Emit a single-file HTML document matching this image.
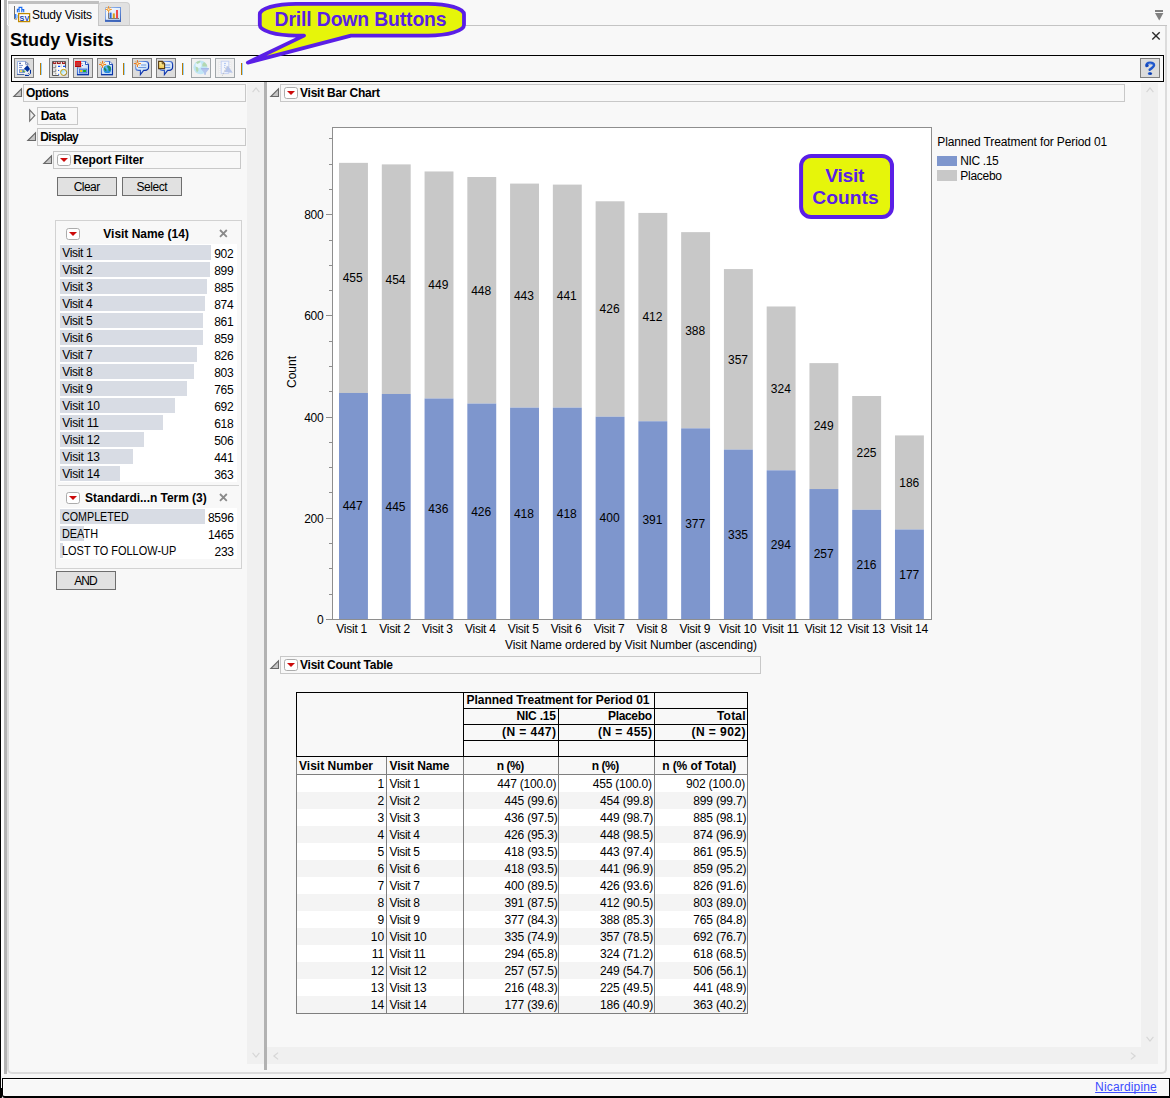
<!DOCTYPE html>
<html><head><meta charset="utf-8"><title>Study Visits</title>
<style>
html,body{margin:0;padding:0;}
body{width:1170px;height:1098px;position:relative;overflow:hidden;background:#fff;font-family:"Liberation Sans", sans-serif;font-size:12px;color:#000;}
.a{position:absolute;box-sizing:border-box;}
.t{position:absolute;white-space:pre;}
svg{position:absolute;overflow:visible;}
</style></head><body>
<div class="a" style="left:0px;top:0px;width:1170px;height:1098px;background:#f8f8f8;"></div>
<div class="a" style="left:0px;top:0px;width:1px;height:1098px;background:#000;"></div>
<div class="a" style="left:1px;top:0px;width:3px;height:1076px;background:#fff;"></div>
<div class="a" style="left:4px;top:0px;width:3px;height:1074px;background:#b4b4b4;"></div>
<div class="a" style="left:7px;top:25px;width:1160px;height:1049px;border:2px solid #dcdcdc;border-top:none;border-radius:0 0 5px 5px;"></div>
<div class="a" style="left:98px;top:25px;width:1069px;height:1px;background:#c4c4c4;"></div>
<div class="a" style="left:8px;top:1px;width:91px;height:25px;background:#f8f8f8;"></div>
<div class="a" style="left:8px;top:1px;width:91px;height:3px;background:#c0c0c0;"></div>
<div class="a" style="left:7px;top:0px;width:1px;height:25px;background:#fff;"></div>
<div class="a" style="left:8px;top:4px;width:1px;height:21px;background:#e4e4e4;"></div>
<div class="a" style="left:98px;top:2px;width:32px;height:24px;background:#e1e1e1;border:1px solid #d0d0d0;border-radius:4px 4px 0 0;border-left-color:#c6c6c6;border-bottom:1px solid #c4c4c4;"></div>
<div class="t" style="left:32.00px;top:5.84px;font-size:12px;line-height:18px;letter-spacing:-0.226px;">Study Visits</div>
<svg style="left:1150px;top:5px" width="20" height="40" viewBox="1150 5 20 40"><rect x="1155" y="10" width="8" height="2" fill="#808080"/><path d="M1155 13h8.4l-4.2 7.4z" fill="#808080"/><path d="M1152.3 32.3l7.4 7.2M1159.7 32.3l-7.4 7.2" stroke="#2b2b2b" stroke-width="1.4" fill="none"/></svg>
<div class="t" style="left:9.90px;top:26.96px;font-size:18px;line-height:27px;font-weight:bold;letter-spacing:0.082px;">Study Visits</div>
<div class="a" style="left:11px;top:55px;width:1153px;height:27px;border:1px solid #000;"></div>
<div class="a" style="left:14px;top:58px;width:20px;height:20px;background:#dcdcdc;border:1px solid #7f7f7f;"></div>
<div class="a" style="left:49px;top:58px;width:20px;height:20px;background:#dcdcdc;border:1px solid #7f7f7f;"></div>
<div class="a" style="left:73px;top:58px;width:20px;height:20px;background:#dcdcdc;border:1px solid #7f7f7f;"></div>
<div class="a" style="left:97px;top:58px;width:20px;height:20px;background:#dcdcdc;border:1px solid #7f7f7f;"></div>
<div class="a" style="left:132px;top:58px;width:20px;height:20px;background:#dcdcdc;border:1px solid #7f7f7f;"></div>
<div class="a" style="left:156px;top:58px;width:20px;height:20px;background:#dcdcdc;border:1px solid #7f7f7f;"></div>
<div class="a" style="left:191px;top:58px;width:20px;height:20px;background:#f1f1f1;border:1px solid #a0a6a9;"></div>
<div class="a" style="left:215px;top:58px;width:20px;height:20px;background:#f1f1f1;border:1px solid #a0a6a9;"></div>
<div class="a" style="left:40px;top:63px;width:1px;height:12px;background:#c07c00;"></div>
<div class="a" style="left:41px;top:63px;width:1px;height:12px;background:#8fd0ff;"></div>
<div class="a" style="left:123px;top:63px;width:1px;height:12px;background:#c07c00;"></div>
<div class="a" style="left:124px;top:63px;width:1px;height:12px;background:#8fd0ff;"></div>
<div class="a" style="left:182px;top:63px;width:1px;height:12px;background:#c07c00;"></div>
<div class="a" style="left:183px;top:63px;width:1px;height:12px;background:#8fd0ff;"></div>
<div class="a" style="left:241px;top:63px;width:1px;height:12px;background:#c07c00;"></div>
<div class="a" style="left:242px;top:63px;width:1px;height:12px;background:#8fd0ff;"></div>
<div class="a" style="left:1140px;top:58px;width:20px;height:20px;background:#dcdcdc;border:1px solid #7f7f7f;"></div>
<svg style="left:1140px;top:58px" width="20" height="20" viewBox="1140 58 20 20"><path d="M1146.5 65.9Q1145.9 62.9 1150.2 62.8Q1154.3 62.9 1154 65.4Q1153.8 66.9 1149.7 69.8" stroke="#1f57cc" stroke-width="2.5" fill="none" stroke-linecap="round"/><circle cx="1147.2" cy="65.6" r="1.5" fill="#1546b8"/><path d="M1148.6 64.2Q1150 63.2 1151.6 64.4" stroke="#7fa8f0" stroke-width="0.9" fill="none"/><ellipse cx="1150" cy="73.4" rx="2.1" ry="1.5" fill="#1f57cc"/><ellipse cx="1150.6" cy="73.8" rx="1.1" ry="0.8" fill="#0a349c"/></svg>
<div class="a" style="left:247px;top:83px;width:17px;height:981px;background:#f0f0f0;"></div>
<svg style="left:256.3px;top:90.2px" width="1" height="1"><path d="M-3.4 2.1L0 -2.1L3.4 2.1" stroke="#d6d6d6" stroke-width="1.2" fill="none"/></svg>
<svg style="left:256.4px;top:1055.4px" width="1" height="1"><path d="M-3.4 -2.1L0 2.1L3.4 -2.1" stroke="#d6d6d6" stroke-width="1.2" fill="none"/></svg>
<div class="a" style="left:264px;top:82px;width:3px;height:988px;background:#b2b2b2;"></div>
<svg style="left:13px;top:88px" width="10" height="10"><path d="M8.5 0.8V8.5H0.8Z" fill="#c6c6c6" stroke="#686868" stroke-width="1.1"/></svg>
<div class="a" style="left:23px;top:84px;width:223px;height:18px;border:1px solid #c8c8c8;"></div>
<div class="t" style="left:26.00px;top:83.84px;font-size:12px;line-height:18px;font-weight:bold;letter-spacing:-0.388px;">Options</div>
<svg style="left:29px;top:109px" width="8" height="14"><path d="M0.7 0.9L5.8 6.5L0.7 12.1Z" fill="#f0f0f0" stroke="#707070" stroke-width="1.15"/></svg>
<div class="a" style="left:37px;top:107px;width:41px;height:18px;border:1px solid #c8c8c8;"></div>
<div class="t" style="left:40.70px;top:106.84px;font-size:12px;line-height:18px;font-weight:bold;letter-spacing:-0.239px;">Data</div>
<svg style="left:27px;top:132px" width="10" height="10"><path d="M8.5 0.8V8.5H0.8Z" fill="#c6c6c6" stroke="#686868" stroke-width="1.1"/></svg>
<div class="a" style="left:37px;top:128px;width:209px;height:18px;border:1px solid #c8c8c8;"></div>
<div class="t" style="left:40.30px;top:127.84px;font-size:12px;line-height:18px;font-weight:bold;letter-spacing:-0.698px;">Display</div>
<svg style="left:43px;top:155px" width="10" height="10"><path d="M8.5 0.8V8.5H0.8Z" fill="#c6c6c6" stroke="#686868" stroke-width="1.1"/></svg>
<div class="a" style="left:53px;top:151px;width:188px;height:18px;border:1px solid #c8c8c8;"></div>
<svg style="left:57px;top:154px" width="14" height="12"><rect x="0.5" y="0.5" width="13" height="11" rx="2.2" fill="#fff" stroke="#acacac"/><path d="M3.0 3.9h8l-4 4z" fill="#cc0a0a"/></svg>
<div class="t" style="left:73.30px;top:150.84px;font-size:12px;line-height:18px;font-weight:bold;letter-spacing:-0.070px;">Report Filter</div>
<div class="a" style="left:57px;top:177px;width:60px;height:19px;background:#e1e1e1;border:1px solid #6e6e6e;"></div>
<div class="t" style="left:73.75px;top:177.54px;font-size:12px;line-height:18px;letter-spacing:-0.547px;">Clear</div>
<div class="a" style="left:122px;top:177px;width:60px;height:19px;background:#e1e1e1;border:1px solid #6e6e6e;"></div>
<div class="t" style="left:136.50px;top:177.54px;font-size:12px;line-height:18px;letter-spacing:-0.472px;">Select</div>
<div class="a" style="left:55px;top:220px;width:187px;height:349px;border:1px solid #d2d2d2;"></div>
<svg style="left:66px;top:227.6px" width="14" height="12"><rect x="0.5" y="0.5" width="13" height="11" rx="2.2" fill="#fff" stroke="#acacac"/><path d="M3.0 3.9h8l-4 4z" fill="#cc0a0a"/></svg>
<div class="t" style="left:103.30px;top:224.64px;font-size:12px;line-height:18px;font-weight:bold;letter-spacing:-0.016px;">Visit Name (14)</div>
<svg style="left:219px;top:229px" width="9" height="9"><path d="M1 1l6.8 6.8M7.8 1l-6.8 6.8" stroke="#8a8a8a" stroke-width="1.8" fill="none"/></svg>
<div class="a" style="left:60px;top:244px;width:177px;height:238px;background:#fff;"></div>
<div class="a" style="left:60px;top:245px;width:151px;height:15px;background:#d8dce4;"></div>
<div class="t" style="left:62.30px;top:244.04px;font-size:12px;line-height:18px;letter-spacing:-0.333px;">Visit 1</div>
<div class="t" style="left:214.17px;top:245.04px;font-size:12px;line-height:18px;letter-spacing:-0.300px;">902</div>
<div class="a" style="left:60px;top:262px;width:150px;height:15px;background:#d8dce4;"></div>
<div class="t" style="left:62.30px;top:261.04px;font-size:12px;line-height:18px;letter-spacing:-0.333px;">Visit 2</div>
<div class="t" style="left:214.17px;top:262.04px;font-size:12px;line-height:18px;letter-spacing:-0.300px;">899</div>
<div class="a" style="left:60px;top:279px;width:147px;height:15px;background:#d8dce4;"></div>
<div class="t" style="left:62.30px;top:278.04px;font-size:12px;line-height:18px;letter-spacing:-0.333px;">Visit 3</div>
<div class="t" style="left:214.17px;top:279.04px;font-size:12px;line-height:18px;letter-spacing:-0.300px;">885</div>
<div class="a" style="left:60px;top:296px;width:145px;height:15px;background:#d8dce4;"></div>
<div class="t" style="left:62.30px;top:295.04px;font-size:12px;line-height:18px;letter-spacing:-0.333px;">Visit 4</div>
<div class="t" style="left:214.17px;top:296.04px;font-size:12px;line-height:18px;letter-spacing:-0.300px;">874</div>
<div class="a" style="left:60px;top:313px;width:143px;height:15px;background:#d8dce4;"></div>
<div class="t" style="left:62.30px;top:312.04px;font-size:12px;line-height:18px;letter-spacing:-0.333px;">Visit 5</div>
<div class="t" style="left:214.17px;top:313.04px;font-size:12px;line-height:18px;letter-spacing:-0.300px;">861</div>
<div class="a" style="left:60px;top:330px;width:143px;height:15px;background:#d8dce4;"></div>
<div class="t" style="left:62.30px;top:329.04px;font-size:12px;line-height:18px;letter-spacing:-0.333px;">Visit 6</div>
<div class="t" style="left:214.17px;top:330.04px;font-size:12px;line-height:18px;letter-spacing:-0.300px;">859</div>
<div class="a" style="left:60px;top:347px;width:137px;height:15px;background:#d8dce4;"></div>
<div class="t" style="left:62.30px;top:346.04px;font-size:12px;line-height:18px;letter-spacing:-0.333px;">Visit 7</div>
<div class="t" style="left:214.17px;top:347.04px;font-size:12px;line-height:18px;letter-spacing:-0.300px;">826</div>
<div class="a" style="left:60px;top:364px;width:134px;height:15px;background:#d8dce4;"></div>
<div class="t" style="left:62.30px;top:363.04px;font-size:12px;line-height:18px;letter-spacing:-0.333px;">Visit 8</div>
<div class="t" style="left:214.17px;top:364.04px;font-size:12px;line-height:18px;letter-spacing:-0.300px;">803</div>
<div class="a" style="left:60px;top:381px;width:127px;height:15px;background:#d8dce4;"></div>
<div class="t" style="left:62.30px;top:380.04px;font-size:12px;line-height:18px;letter-spacing:-0.333px;">Visit 9</div>
<div class="t" style="left:214.17px;top:381.04px;font-size:12px;line-height:18px;letter-spacing:-0.300px;">765</div>
<div class="a" style="left:60px;top:398px;width:115px;height:15px;background:#d8dce4;"></div>
<div class="t" style="left:62.30px;top:397.04px;font-size:12px;line-height:18px;letter-spacing:-0.214px;">Visit 10</div>
<div class="t" style="left:214.17px;top:398.04px;font-size:12px;line-height:18px;letter-spacing:-0.300px;">692</div>
<div class="a" style="left:60px;top:415px;width:103px;height:15px;background:#d8dce4;"></div>
<div class="t" style="left:62.30px;top:414.04px;font-size:12px;line-height:18px;letter-spacing:-0.214px;">Visit 11</div>
<div class="t" style="left:214.17px;top:415.04px;font-size:12px;line-height:18px;letter-spacing:-0.300px;">618</div>
<div class="a" style="left:60px;top:432px;width:84px;height:15px;background:#d8dce4;"></div>
<div class="t" style="left:62.30px;top:431.04px;font-size:12px;line-height:18px;letter-spacing:-0.214px;">Visit 12</div>
<div class="t" style="left:214.17px;top:432.04px;font-size:12px;line-height:18px;letter-spacing:-0.300px;">506</div>
<div class="a" style="left:60px;top:449px;width:73px;height:15px;background:#d8dce4;"></div>
<div class="t" style="left:62.30px;top:448.04px;font-size:12px;line-height:18px;letter-spacing:-0.214px;">Visit 13</div>
<div class="t" style="left:214.17px;top:449.04px;font-size:12px;line-height:18px;letter-spacing:-0.300px;">441</div>
<div class="a" style="left:60px;top:466px;width:60px;height:15px;background:#d8dce4;"></div>
<div class="t" style="left:62.30px;top:465.04px;font-size:12px;line-height:18px;letter-spacing:-0.214px;">Visit 14</div>
<div class="t" style="left:214.17px;top:466.04px;font-size:12px;line-height:18px;letter-spacing:-0.300px;">363</div>
<div class="a" style="left:58px;top:485px;width:181px;height:1px;background:#d2d2d2;"></div>
<svg style="left:66px;top:492px" width="14" height="12"><rect x="0.5" y="0.5" width="13" height="11" rx="2.2" fill="#fff" stroke="#acacac"/><path d="M3.0 3.9h8l-4 4z" fill="#cc0a0a"/></svg>
<div class="t" style="left:85.10px;top:488.64px;font-size:12px;line-height:18px;font-weight:bold;letter-spacing:-0.041px;">Standardi...n Term (3)</div>
<svg style="left:219px;top:493px" width="9" height="9"><path d="M1 1l6.8 6.8M7.8 1l-6.8 6.8" stroke="#8a8a8a" stroke-width="1.8" fill="none"/></svg>
<div class="a" style="left:60px;top:508px;width:177px;height:51px;background:#fff;"></div>
<div class="a" style="left:60px;top:509px;width:145px;height:15px;background:#d8dce4;"></div>
<div class="t" style="left:62.30px;top:507.84px;font-size:12px;line-height:18px;transform:scaleX(0.8929);transform-origin:0 0;">COMPLETED</div>
<div class="t" style="left:207.90px;top:508.84px;font-size:12px;line-height:18px;letter-spacing:-0.200px;">8596</div>
<div class="a" style="left:60px;top:526px;width:24px;height:15px;background:#d8dce4;"></div>
<div class="t" style="left:62.30px;top:524.84px;font-size:12px;line-height:18px;transform:scaleX(0.9045);transform-origin:0 0;">DEATH</div>
<div class="t" style="left:207.90px;top:525.84px;font-size:12px;line-height:18px;letter-spacing:-0.200px;">1465</div>
<div class="a" style="left:60px;top:543px;width:3px;height:15px;background:#d8dce4;"></div>
<div class="t" style="left:62.30px;top:541.84px;font-size:12px;line-height:18px;transform:scaleX(0.9129);transform-origin:0 0;">LOST TO FOLLOW-UP</div>
<div class="t" style="left:214.57px;top:542.84px;font-size:12px;line-height:18px;letter-spacing:-0.300px;">233</div>
<div class="a" style="left:56px;top:571px;width:60px;height:19px;background:#e1e1e1;border:1px solid #6e6e6e;"></div>
<div class="t" style="left:74.25px;top:571.54px;font-size:12px;line-height:18px;letter-spacing:-0.922px;">AND</div>
<div class="a" style="left:1141px;top:83px;width:17px;height:981px;background:#f0f0f0;"></div>
<div class="a" style="left:267px;top:1047px;width:891px;height:17px;background:#f0f0f0;"></div>
<svg style="left:1150.4px;top:90.2px" width="1" height="1"><path d="M-3.4 2.1L0 -2.1L3.4 2.1" stroke="#d6d6d6" stroke-width="1.2" fill="none"/></svg>
<svg style="left:1150.3px;top:1038.6px" width="1" height="1"><path d="M-3.4 -2.1L0 2.1L3.4 -2.1" stroke="#d6d6d6" stroke-width="1.2" fill="none"/></svg>
<svg style="left:275.6px;top:1055.5px" width="1" height="1"><path d="M2.1 -3.4L-2.1 0L2.1 3.4" stroke="#d6d6d6" stroke-width="1.2" fill="none"/></svg>
<svg style="left:1132.9px;top:1055.5px" width="1" height="1"><path d="M-2.1 -3.4L2.1 0L-2.1 3.4" stroke="#d6d6d6" stroke-width="1.2" fill="none"/></svg>
<svg style="left:270px;top:88px" width="10" height="10"><path d="M8.5 0.8V8.5H0.8Z" fill="#c6c6c6" stroke="#686868" stroke-width="1.1"/></svg>
<div class="a" style="left:280px;top:84px;width:845px;height:18px;border:1px solid #c8c8c8;"></div>
<svg style="left:284px;top:87px" width="14" height="12"><rect x="0.5" y="0.5" width="13" height="11" rx="2.2" fill="#fff" stroke="#acacac"/><path d="M3.0 3.9h8l-4 4z" fill="#cc0a0a"/></svg>
<div class="t" style="left:300.00px;top:83.84px;font-size:12px;line-height:18px;font-weight:bold;letter-spacing:-0.224px;">Visit Bar Chart</div>
<svg style="left:0;top:0" width="1170" height="700"><rect x="332.5" y="127.5" width="599" height="492" fill="#fff" stroke="#8e8e8e" shape-rendering="crispEdges"/><rect x="339.03" y="162.86" width="28.9" height="230.09" fill="#c8c8c8"/><rect x="339.03" y="392.95" width="28.9" height="226.05" fill="#7e96cd"/><rect x="381.80" y="164.38" width="28.9" height="229.59" fill="#c8c8c8"/><rect x="381.80" y="393.96" width="28.9" height="225.04" fill="#7e96cd"/><rect x="424.56" y="171.46" width="28.9" height="227.06" fill="#c8c8c8"/><rect x="424.56" y="398.51" width="28.9" height="220.49" fill="#7e96cd"/><rect x="467.33" y="177.02" width="28.9" height="226.55" fill="#c8c8c8"/><rect x="467.33" y="403.57" width="28.9" height="215.43" fill="#7e96cd"/><rect x="510.09" y="183.59" width="28.9" height="224.03" fill="#c8c8c8"/><rect x="510.09" y="407.62" width="28.9" height="211.38" fill="#7e96cd"/><rect x="552.86" y="184.60" width="28.9" height="223.01" fill="#c8c8c8"/><rect x="552.86" y="407.62" width="28.9" height="211.38" fill="#7e96cd"/><rect x="595.62" y="201.29" width="28.9" height="215.43" fill="#c8c8c8"/><rect x="595.62" y="416.72" width="28.9" height="202.28" fill="#7e96cd"/><rect x="638.39" y="212.92" width="28.9" height="208.35" fill="#c8c8c8"/><rect x="638.39" y="421.27" width="28.9" height="197.73" fill="#7e96cd"/><rect x="681.15" y="232.14" width="28.9" height="196.21" fill="#c8c8c8"/><rect x="681.15" y="428.35" width="28.9" height="190.65" fill="#7e96cd"/><rect x="723.92" y="269.06" width="28.9" height="180.53" fill="#c8c8c8"/><rect x="723.92" y="449.59" width="28.9" height="169.41" fill="#7e96cd"/><rect x="766.68" y="306.48" width="28.9" height="163.85" fill="#c8c8c8"/><rect x="766.68" y="470.32" width="28.9" height="148.68" fill="#7e96cd"/><rect x="809.45" y="363.12" width="28.9" height="125.92" fill="#c8c8c8"/><rect x="809.45" y="489.04" width="28.9" height="129.96" fill="#7e96cd"/><rect x="852.21" y="395.99" width="28.9" height="113.78" fill="#c8c8c8"/><rect x="852.21" y="509.77" width="28.9" height="109.23" fill="#7e96cd"/><rect x="894.98" y="435.43" width="28.9" height="94.06" fill="#c8c8c8"/><rect x="894.98" y="529.49" width="28.9" height="89.51" fill="#7e96cd"/><rect x="326" y="619" width="6" height="1" fill="#8e8e8e" shape-rendering="crispEdges"/><rect x="329" y="594" width="3" height="1" fill="#8e8e8e" shape-rendering="crispEdges"/><rect x="329" y="568" width="3" height="1" fill="#8e8e8e" shape-rendering="crispEdges"/><rect x="329" y="543" width="3" height="1" fill="#8e8e8e" shape-rendering="crispEdges"/><rect x="326" y="518" width="6" height="1" fill="#8e8e8e" shape-rendering="crispEdges"/><rect x="329" y="492" width="3" height="1" fill="#8e8e8e" shape-rendering="crispEdges"/><rect x="329" y="467" width="3" height="1" fill="#8e8e8e" shape-rendering="crispEdges"/><rect x="329" y="442" width="3" height="1" fill="#8e8e8e" shape-rendering="crispEdges"/><rect x="326" y="417" width="6" height="1" fill="#8e8e8e" shape-rendering="crispEdges"/><rect x="329" y="391" width="3" height="1" fill="#8e8e8e" shape-rendering="crispEdges"/><rect x="329" y="366" width="3" height="1" fill="#8e8e8e" shape-rendering="crispEdges"/><rect x="329" y="341" width="3" height="1" fill="#8e8e8e" shape-rendering="crispEdges"/><rect x="326" y="315" width="6" height="1" fill="#8e8e8e" shape-rendering="crispEdges"/><rect x="329" y="290" width="3" height="1" fill="#8e8e8e" shape-rendering="crispEdges"/><rect x="329" y="265" width="3" height="1" fill="#8e8e8e" shape-rendering="crispEdges"/><rect x="329" y="240" width="3" height="1" fill="#8e8e8e" shape-rendering="crispEdges"/><rect x="326" y="214" width="6" height="1" fill="#8e8e8e" shape-rendering="crispEdges"/><rect x="329" y="189" width="3" height="1" fill="#8e8e8e" shape-rendering="crispEdges"/><rect x="329" y="164" width="3" height="1" fill="#8e8e8e" shape-rendering="crispEdges"/><rect x="329" y="138" width="3" height="1" fill="#8e8e8e" shape-rendering="crispEdges"/></svg>
<div class="t" style="left:316.91px;top:611.04px;font-size:12px;line-height:18px;">0</div>
<div class="t" style="left:304.17px;top:510.04px;font-size:12px;line-height:18px;letter-spacing:-0.300px;">200</div>
<div class="t" style="left:304.17px;top:409.04px;font-size:12px;line-height:18px;letter-spacing:-0.300px;">400</div>
<div class="t" style="left:304.17px;top:307.04px;font-size:12px;line-height:18px;letter-spacing:-0.300px;">600</div>
<div class="t" style="left:304.17px;top:206.04px;font-size:12px;line-height:18px;letter-spacing:-0.300px;">800</div>
<div class="t" style="left:336.32px;top:620.04px;font-size:12px;line-height:18px;letter-spacing:-0.250px;">Visit 1</div>
<div class="t" style="left:342.68px;top:496.69px;font-size:12px;line-height:18px;">447</div>
<div class="t" style="left:342.68px;top:268.69px;font-size:12px;line-height:18px;">455</div>
<div class="t" style="left:379.20px;top:620.04px;font-size:12px;line-height:18px;letter-spacing:-0.250px;">Visit 2</div>
<div class="t" style="left:385.50px;top:497.69px;font-size:12px;line-height:18px;">445</div>
<div class="t" style="left:385.50px;top:270.69px;font-size:12px;line-height:18px;">454</div>
<div class="t" style="left:422.09px;top:620.04px;font-size:12px;line-height:18px;letter-spacing:-0.250px;">Visit 3</div>
<div class="t" style="left:428.31px;top:499.69px;font-size:12px;line-height:18px;">436</div>
<div class="t" style="left:428.31px;top:275.69px;font-size:12px;line-height:18px;">449</div>
<div class="t" style="left:464.97px;top:620.04px;font-size:12px;line-height:18px;letter-spacing:-0.250px;">Visit 4</div>
<div class="t" style="left:471.13px;top:502.69px;font-size:12px;line-height:18px;">426</div>
<div class="t" style="left:471.13px;top:281.69px;font-size:12px;line-height:18px;">448</div>
<div class="t" style="left:507.86px;top:620.04px;font-size:12px;line-height:18px;letter-spacing:-0.250px;">Visit 5</div>
<div class="t" style="left:513.94px;top:504.69px;font-size:12px;line-height:18px;">418</div>
<div class="t" style="left:513.94px;top:286.69px;font-size:12px;line-height:18px;">443</div>
<div class="t" style="left:550.74px;top:620.04px;font-size:12px;line-height:18px;letter-spacing:-0.250px;">Visit 6</div>
<div class="t" style="left:556.76px;top:504.69px;font-size:12px;line-height:18px;">418</div>
<div class="t" style="left:556.76px;top:286.69px;font-size:12px;line-height:18px;">441</div>
<div class="t" style="left:593.63px;top:620.04px;font-size:12px;line-height:18px;letter-spacing:-0.250px;">Visit 7</div>
<div class="t" style="left:599.57px;top:508.69px;font-size:12px;line-height:18px;">400</div>
<div class="t" style="left:599.57px;top:299.69px;font-size:12px;line-height:18px;">426</div>
<div class="t" style="left:636.51px;top:620.04px;font-size:12px;line-height:18px;letter-spacing:-0.250px;">Visit 8</div>
<div class="t" style="left:642.39px;top:510.69px;font-size:12px;line-height:18px;">391</div>
<div class="t" style="left:642.39px;top:307.69px;font-size:12px;line-height:18px;">412</div>
<div class="t" style="left:679.40px;top:620.04px;font-size:12px;line-height:18px;letter-spacing:-0.250px;">Visit 9</div>
<div class="t" style="left:685.20px;top:514.69px;font-size:12px;line-height:18px;">377</div>
<div class="t" style="left:685.20px;top:321.69px;font-size:12px;line-height:18px;">388</div>
<div class="t" style="left:718.94px;top:620.04px;font-size:12px;line-height:18px;letter-spacing:-0.214px;">Visit 10</div>
<div class="t" style="left:728.02px;top:525.69px;font-size:12px;line-height:18px;">335</div>
<div class="t" style="left:728.02px;top:350.69px;font-size:12px;line-height:18px;">357</div>
<div class="t" style="left:762.27px;top:620.04px;font-size:12px;line-height:18px;letter-spacing:-0.214px;">Visit 11</div>
<div class="t" style="left:770.83px;top:535.69px;font-size:12px;line-height:18px;">294</div>
<div class="t" style="left:770.83px;top:379.69px;font-size:12px;line-height:18px;">324</div>
<div class="t" style="left:804.71px;top:620.04px;font-size:12px;line-height:18px;letter-spacing:-0.214px;">Visit 12</div>
<div class="t" style="left:813.65px;top:544.69px;font-size:12px;line-height:18px;">257</div>
<div class="t" style="left:813.65px;top:416.69px;font-size:12px;line-height:18px;">249</div>
<div class="t" style="left:847.60px;top:620.04px;font-size:12px;line-height:18px;letter-spacing:-0.214px;">Visit 13</div>
<div class="t" style="left:856.46px;top:555.69px;font-size:12px;line-height:18px;">216</div>
<div class="t" style="left:856.46px;top:443.69px;font-size:12px;line-height:18px;">225</div>
<div class="t" style="left:890.48px;top:620.04px;font-size:12px;line-height:18px;letter-spacing:-0.214px;">Visit 14</div>
<div class="t" style="left:899.28px;top:565.69px;font-size:12px;line-height:18px;">177</div>
<div class="t" style="left:899.28px;top:473.69px;font-size:12px;line-height:18px;">186</div>
<div class="t" style="left:505.00px;top:636.04px;font-size:12px;line-height:18px;letter-spacing:-0.097px;">Visit Name ordered by Visit Number (ascending)</div>
<div class="t" style="left:0.00px;top:-13.16px;font-size:12px;line-height:18px;left:285px;top:388.4px;transform:rotate(-90deg);transform-origin:0 0;line-height:14px;">Count</div>
<div class="t" style="left:937.30px;top:133.04px;font-size:12px;line-height:18px;letter-spacing:-0.115px;">Planned Treatment for Period 01</div>
<div class="a" style="left:937px;top:155.6px;width:19.6px;height:10.2px;background:#7e96cd;"></div>
<div class="t" style="left:960.30px;top:151.64px;font-size:12px;line-height:18px;letter-spacing:-0.383px;">NIC .15</div>
<div class="a" style="left:937px;top:170.4px;width:19.6px;height:10.2px;background:#c8c8c8;"></div>
<div class="t" style="left:960.30px;top:166.64px;font-size:12px;line-height:18px;letter-spacing:-0.283px;">Placebo</div>
<svg style="left:270px;top:660px" width="10" height="10"><path d="M8.5 0.8V8.5H0.8Z" fill="#c6c6c6" stroke="#686868" stroke-width="1.1"/></svg>
<div class="a" style="left:280px;top:656px;width:481px;height:18px;border:1px solid #c8c8c8;"></div>
<svg style="left:284px;top:659px" width="14" height="12"><rect x="0.5" y="0.5" width="13" height="11" rx="2.2" fill="#fff" stroke="#acacac"/><path d="M3.0 3.9h8l-4 4z" fill="#cc0a0a"/></svg>
<div class="t" style="left:300.00px;top:655.84px;font-size:12px;line-height:18px;font-weight:bold;letter-spacing:-0.244px;">Visit Count Table</div>
<div class="a" style="left:297px;top:775px;width:450px;height:17px;background:#fff;"></div>
<div class="a" style="left:297px;top:792px;width:450px;height:17px;background:#f4f4f4;"></div>
<div class="a" style="left:297px;top:809px;width:450px;height:17px;background:#fff;"></div>
<div class="a" style="left:297px;top:826px;width:450px;height:17px;background:#f4f4f4;"></div>
<div class="a" style="left:297px;top:843px;width:450px;height:17px;background:#fff;"></div>
<div class="a" style="left:297px;top:860px;width:450px;height:17px;background:#f4f4f4;"></div>
<div class="a" style="left:297px;top:877px;width:450px;height:17px;background:#fff;"></div>
<div class="a" style="left:297px;top:894px;width:450px;height:17px;background:#f4f4f4;"></div>
<div class="a" style="left:297px;top:911px;width:450px;height:17px;background:#fff;"></div>
<div class="a" style="left:297px;top:928px;width:450px;height:17px;background:#f4f4f4;"></div>
<div class="a" style="left:297px;top:945px;width:450px;height:17px;background:#fff;"></div>
<div class="a" style="left:297px;top:962px;width:450px;height:17px;background:#f4f4f4;"></div>
<div class="a" style="left:297px;top:979px;width:450px;height:17px;background:#fff;"></div>
<div class="a" style="left:297px;top:996px;width:450px;height:17px;background:#f4f4f4;"></div>
<div class="a" style="left:296px;top:692px;width:452px;height:1px;background:#000;"></div>
<div class="a" style="left:296px;top:692px;width:1px;height:65px;background:#000;"></div>
<div class="a" style="left:747px;top:692px;width:1px;height:65px;background:#000;"></div>
<div class="a" style="left:296px;top:756px;width:452px;height:1px;background:#000;"></div>
<div class="a" style="left:463px;top:708px;width:285px;height:1px;background:#000;"></div>
<div class="a" style="left:463px;top:724px;width:285px;height:1px;background:#000;"></div>
<div class="a" style="left:463px;top:740px;width:285px;height:1px;background:#000;"></div>
<div class="a" style="left:463px;top:692px;width:1px;height:65px;background:#000;"></div>
<div class="a" style="left:654px;top:692px;width:1px;height:65px;background:#000;"></div>
<div class="a" style="left:558px;top:708px;width:1px;height:49px;background:#000;"></div>
<div class="a" style="left:296px;top:757px;width:1px;height:257px;background:#7f7f7f;"></div>
<div class="a" style="left:747px;top:757px;width:1px;height:257px;background:#7f7f7f;"></div>
<div class="a" style="left:386px;top:757px;width:1px;height:257px;background:#7f7f7f;"></div>
<div class="a" style="left:463px;top:757px;width:1px;height:257px;background:#7f7f7f;"></div>
<div class="a" style="left:558px;top:757px;width:1px;height:257px;background:#7f7f7f;"></div>
<div class="a" style="left:654px;top:757px;width:1px;height:257px;background:#7f7f7f;"></div>
<div class="a" style="left:296px;top:774px;width:452px;height:1px;background:#7f7f7f;"></div>
<div class="a" style="left:296px;top:1013px;width:452px;height:1px;background:#7f7f7f;"></div>
<div class="t" style="left:466.50px;top:691.44px;font-size:12px;line-height:18px;font-weight:bold;letter-spacing:-0.035px;">Planned Treatment for Period 01</div>
<div class="t" style="left:516.50px;top:707.44px;font-size:12px;line-height:18px;font-weight:bold;letter-spacing:-0.198px;">NIC .15</div>
<div class="t" style="left:608.00px;top:707.44px;font-size:12px;line-height:18px;font-weight:bold;letter-spacing:-0.339px;">Placebo</div>
<div class="t" style="left:717.00px;top:707.44px;font-size:12px;line-height:18px;font-weight:bold;letter-spacing:0.180px;">Total</div>
<div class="t" style="left:502.00px;top:723.44px;font-size:12px;line-height:18px;font-weight:bold;letter-spacing:0.455px;">(N = 447)</div>
<div class="t" style="left:598.00px;top:723.44px;font-size:12px;line-height:18px;font-weight:bold;letter-spacing:0.455px;">(N = 455)</div>
<div class="t" style="left:691.50px;top:723.44px;font-size:12px;line-height:18px;font-weight:bold;letter-spacing:0.455px;">(N = 902)</div>
<div class="t" style="left:299.00px;top:757.24px;font-size:12px;line-height:18px;font-weight:bold;letter-spacing:0.017px;">Visit Number</div>
<div class="t" style="left:389.50px;top:757.24px;font-size:12px;line-height:18px;font-weight:bold;letter-spacing:-0.128px;">Visit Name</div>
<div class="t" style="left:496.75px;top:757.24px;font-size:12px;line-height:18px;font-weight:bold;letter-spacing:-0.457px;">n (%)</div>
<div class="t" style="left:591.75px;top:757.24px;font-size:12px;line-height:18px;font-weight:bold;letter-spacing:-0.457px;">n (%)</div>
<div class="t" style="left:662.20px;top:757.24px;font-size:12px;line-height:18px;font-weight:bold;letter-spacing:-0.084px;">n (% of Total)</div>
<div class="t" style="left:377.51px;top:774.84px;font-size:12px;line-height:18px;">1</div>
<div class="t" style="left:389.50px;top:774.84px;font-size:12px;line-height:18px;letter-spacing:-0.333px;">Visit 1</div>
<div class="t" style="left:497.31px;top:774.84px;font-size:12px;line-height:18px;letter-spacing:-0.230px;">447 (100.0)</div>
<div class="t" style="left:592.81px;top:774.84px;font-size:12px;line-height:18px;letter-spacing:-0.230px;">455 (100.0)</div>
<div class="t" style="left:686.11px;top:774.84px;font-size:12px;line-height:18px;letter-spacing:-0.230px;">902 (100.0)</div>
<div class="t" style="left:377.51px;top:791.84px;font-size:12px;line-height:18px;">2</div>
<div class="t" style="left:389.50px;top:791.84px;font-size:12px;line-height:18px;letter-spacing:-0.333px;">Visit 2</div>
<div class="t" style="left:504.45px;top:791.84px;font-size:12px;line-height:18px;letter-spacing:-0.156px;">445 (99.6)</div>
<div class="t" style="left:599.95px;top:791.84px;font-size:12px;line-height:18px;letter-spacing:-0.156px;">454 (99.8)</div>
<div class="t" style="left:693.25px;top:791.84px;font-size:12px;line-height:18px;letter-spacing:-0.156px;">899 (99.7)</div>
<div class="t" style="left:377.51px;top:808.84px;font-size:12px;line-height:18px;">3</div>
<div class="t" style="left:389.50px;top:808.84px;font-size:12px;line-height:18px;letter-spacing:-0.333px;">Visit 3</div>
<div class="t" style="left:504.45px;top:808.84px;font-size:12px;line-height:18px;letter-spacing:-0.156px;">436 (97.5)</div>
<div class="t" style="left:599.95px;top:808.84px;font-size:12px;line-height:18px;letter-spacing:-0.156px;">449 (98.7)</div>
<div class="t" style="left:693.25px;top:808.84px;font-size:12px;line-height:18px;letter-spacing:-0.156px;">885 (98.1)</div>
<div class="t" style="left:377.51px;top:825.84px;font-size:12px;line-height:18px;">4</div>
<div class="t" style="left:389.50px;top:825.84px;font-size:12px;line-height:18px;letter-spacing:-0.333px;">Visit 4</div>
<div class="t" style="left:504.45px;top:825.84px;font-size:12px;line-height:18px;letter-spacing:-0.156px;">426 (95.3)</div>
<div class="t" style="left:599.95px;top:825.84px;font-size:12px;line-height:18px;letter-spacing:-0.156px;">448 (98.5)</div>
<div class="t" style="left:693.25px;top:825.84px;font-size:12px;line-height:18px;letter-spacing:-0.156px;">874 (96.9)</div>
<div class="t" style="left:377.51px;top:842.84px;font-size:12px;line-height:18px;">5</div>
<div class="t" style="left:389.50px;top:842.84px;font-size:12px;line-height:18px;letter-spacing:-0.333px;">Visit 5</div>
<div class="t" style="left:504.45px;top:842.84px;font-size:12px;line-height:18px;letter-spacing:-0.156px;">418 (93.5)</div>
<div class="t" style="left:599.95px;top:842.84px;font-size:12px;line-height:18px;letter-spacing:-0.156px;">443 (97.4)</div>
<div class="t" style="left:693.25px;top:842.84px;font-size:12px;line-height:18px;letter-spacing:-0.156px;">861 (95.5)</div>
<div class="t" style="left:377.51px;top:859.84px;font-size:12px;line-height:18px;">6</div>
<div class="t" style="left:389.50px;top:859.84px;font-size:12px;line-height:18px;letter-spacing:-0.333px;">Visit 6</div>
<div class="t" style="left:504.45px;top:859.84px;font-size:12px;line-height:18px;letter-spacing:-0.156px;">418 (93.5)</div>
<div class="t" style="left:599.95px;top:859.84px;font-size:12px;line-height:18px;letter-spacing:-0.156px;">441 (96.9)</div>
<div class="t" style="left:693.25px;top:859.84px;font-size:12px;line-height:18px;letter-spacing:-0.156px;">859 (95.2)</div>
<div class="t" style="left:377.51px;top:876.84px;font-size:12px;line-height:18px;">7</div>
<div class="t" style="left:389.50px;top:876.84px;font-size:12px;line-height:18px;letter-spacing:-0.333px;">Visit 7</div>
<div class="t" style="left:504.45px;top:876.84px;font-size:12px;line-height:18px;letter-spacing:-0.156px;">400 (89.5)</div>
<div class="t" style="left:599.95px;top:876.84px;font-size:12px;line-height:18px;letter-spacing:-0.156px;">426 (93.6)</div>
<div class="t" style="left:693.25px;top:876.84px;font-size:12px;line-height:18px;letter-spacing:-0.156px;">826 (91.6)</div>
<div class="t" style="left:377.51px;top:893.84px;font-size:12px;line-height:18px;">8</div>
<div class="t" style="left:389.50px;top:893.84px;font-size:12px;line-height:18px;letter-spacing:-0.333px;">Visit 8</div>
<div class="t" style="left:504.45px;top:893.84px;font-size:12px;line-height:18px;letter-spacing:-0.156px;">391 (87.5)</div>
<div class="t" style="left:599.95px;top:893.84px;font-size:12px;line-height:18px;letter-spacing:-0.156px;">412 (90.5)</div>
<div class="t" style="left:693.25px;top:893.84px;font-size:12px;line-height:18px;letter-spacing:-0.156px;">803 (89.0)</div>
<div class="t" style="left:377.51px;top:910.84px;font-size:12px;line-height:18px;">9</div>
<div class="t" style="left:389.50px;top:910.84px;font-size:12px;line-height:18px;letter-spacing:-0.333px;">Visit 9</div>
<div class="t" style="left:504.45px;top:910.84px;font-size:12px;line-height:18px;letter-spacing:-0.156px;">377 (84.3)</div>
<div class="t" style="left:599.95px;top:910.84px;font-size:12px;line-height:18px;letter-spacing:-0.156px;">388 (85.3)</div>
<div class="t" style="left:693.25px;top:910.84px;font-size:12px;line-height:18px;letter-spacing:-0.156px;">765 (84.8)</div>
<div class="t" style="left:370.84px;top:927.84px;font-size:12px;line-height:18px;">10</div>
<div class="t" style="left:389.50px;top:927.84px;font-size:12px;line-height:18px;letter-spacing:-0.286px;">Visit 10</div>
<div class="t" style="left:504.45px;top:927.84px;font-size:12px;line-height:18px;letter-spacing:-0.156px;">335 (74.9)</div>
<div class="t" style="left:599.95px;top:927.84px;font-size:12px;line-height:18px;letter-spacing:-0.156px;">357 (78.5)</div>
<div class="t" style="left:693.25px;top:927.84px;font-size:12px;line-height:18px;letter-spacing:-0.156px;">692 (76.7)</div>
<div class="t" style="left:371.73px;top:944.84px;font-size:12px;line-height:18px;">11</div>
<div class="t" style="left:389.50px;top:944.84px;font-size:12px;line-height:18px;letter-spacing:-0.286px;">Visit 11</div>
<div class="t" style="left:504.45px;top:944.84px;font-size:12px;line-height:18px;letter-spacing:-0.156px;">294 (65.8)</div>
<div class="t" style="left:599.95px;top:944.84px;font-size:12px;line-height:18px;letter-spacing:-0.156px;">324 (71.2)</div>
<div class="t" style="left:693.25px;top:944.84px;font-size:12px;line-height:18px;letter-spacing:-0.156px;">618 (68.5)</div>
<div class="t" style="left:370.84px;top:961.84px;font-size:12px;line-height:18px;">12</div>
<div class="t" style="left:389.50px;top:961.84px;font-size:12px;line-height:18px;letter-spacing:-0.286px;">Visit 12</div>
<div class="t" style="left:504.45px;top:961.84px;font-size:12px;line-height:18px;letter-spacing:-0.156px;">257 (57.5)</div>
<div class="t" style="left:599.95px;top:961.84px;font-size:12px;line-height:18px;letter-spacing:-0.156px;">249 (54.7)</div>
<div class="t" style="left:693.25px;top:961.84px;font-size:12px;line-height:18px;letter-spacing:-0.156px;">506 (56.1)</div>
<div class="t" style="left:370.84px;top:978.84px;font-size:12px;line-height:18px;">13</div>
<div class="t" style="left:389.50px;top:978.84px;font-size:12px;line-height:18px;letter-spacing:-0.286px;">Visit 13</div>
<div class="t" style="left:504.45px;top:978.84px;font-size:12px;line-height:18px;letter-spacing:-0.156px;">216 (48.3)</div>
<div class="t" style="left:599.95px;top:978.84px;font-size:12px;line-height:18px;letter-spacing:-0.156px;">225 (49.5)</div>
<div class="t" style="left:693.25px;top:978.84px;font-size:12px;line-height:18px;letter-spacing:-0.156px;">441 (48.9)</div>
<div class="t" style="left:370.84px;top:995.84px;font-size:12px;line-height:18px;">14</div>
<div class="t" style="left:389.50px;top:995.84px;font-size:12px;line-height:18px;letter-spacing:-0.286px;">Visit 14</div>
<div class="t" style="left:504.45px;top:995.84px;font-size:12px;line-height:18px;letter-spacing:-0.156px;">177 (39.6)</div>
<div class="t" style="left:599.95px;top:995.84px;font-size:12px;line-height:18px;letter-spacing:-0.156px;">186 (40.9)</div>
<div class="t" style="left:693.25px;top:995.84px;font-size:12px;line-height:18px;letter-spacing:-0.156px;">363 (40.2)</div>
<div class="a" style="left:0px;top:1088px;width:2px;height:10px;background:#000;border-radius:0 0 0 3px;"></div>
<div class="a" style="left:2px;top:1078px;width:1168px;height:20px;background:#f8f8f8;border:1px solid #000;border-bottom-width:2px;border-right-width:1px;border-radius:0 0 0 3px;box-shadow:inset 1px 1px 0 #fff;"></div>
<div class="t" style="left:1095.10px;top:1078.14px;font-size:12px;line-height:18px;letter-spacing:0.167px;color:#3a4cff;text-decoration:underline;text-decoration-skip-ink:none;">Nicardipine</div>
<svg style="left:0;top:0" width="1170" height="240"><path d="M296 3.8H428A36 10.5 0 0 1 464 14.3V25.1A36 10.5 0 0 1 428 35.6H351L247.8 62.6L304 35.6H296A36.2 10.5 0 0 1 259.8 25.1V14.3A36.2 10.5 0 0 1 296 3.8Z" fill="#e6f50a" stroke="#5a1fe6" stroke-width="3.8" stroke-linejoin="round"/><rect x="801.1" y="156" width="90.9" height="61" rx="10" fill="#e6f50a" stroke="#5a1fe6" stroke-width="4"/></svg>
<div class="t" style="left:274.60px;top:4.68px;font-size:19.4px;line-height:29px;font-weight:bold;letter-spacing:-0.147px;color:#5a1fe6;">Drill Down Buttons</div>
<div class="t" style="left:825.26px;top:160.65px;font-size:19.2px;line-height:29px;font-weight:bold;letter-spacing:-0.275px;color:#5a1fe6;">Visit</div>
<div class="t" style="left:812.25px;top:182.55px;font-size:19.2px;line-height:29px;font-weight:bold;letter-spacing:0.080px;color:#5a1fe6;">Counts</div>
<svg style="left:0;top:0" width="260" height="84"><defs><linearGradient id="gb" x1="0" y1="0" x2="1" y2="1"><stop offset="0" stop-color="#b4ccf4"/><stop offset="0.38" stop-color="#4a78d8"/><stop offset="0.7" stop-color="#0a2fa8"/><stop offset="1" stop-color="#0a2fa8"/></linearGradient><linearGradient id="gf" x1="0" y1="0" x2="0.6" y2="1"><stop offset="0" stop-color="#ffffff"/><stop offset="1" stop-color="#b9d6f4"/></linearGradient><radialGradient id="gg" cx="0.4" cy="0.35" r="0.7"><stop offset="0" stop-color="#5cc0ff"/><stop offset="1" stop-color="#1c7fd8"/></radialGradient><linearGradient id="gy" x1="0" y1="0" x2="0" y2="1"><stop offset="0" stop-color="#fff3a8"/><stop offset="1" stop-color="#f2c94c"/></linearGradient></defs><path d="M14.5 6v13h2.6" stroke="#707070" fill="none"/><path d="M17.4 12.2V9.4H19.1V7.4H21.8V9.6H23.7V12.2M19.1 9.4V12.2M21.8 9.6V12.2" stroke="#1a6cf0" stroke-width="1.15" fill="none"/><rect x="15" y="14" width="1.4" height="4.2" fill="#2a7cff"/><rect x="16.4" y="15" width="1.6" height="3.2" fill="#9cc8ff"/><rect x="18.6" y="13.6" width="11" height="8" fill="#fff" stroke="#c08a00" stroke-width="1.25"/><defs><linearGradient id="gc" x1="0" y1="0" x2="1" y2="1"><stop offset="0" stop-color="#a4c2f2"/><stop offset="0.5" stop-color="#6f98e0"/><stop offset="1" stop-color="#3a60b6"/></linearGradient><linearGradient id="gci" x1="0" y1="0" x2="1" y2="1"><stop offset="0" stop-color="#ffffff"/><stop offset="1" stop-color="#c6dcf6"/></linearGradient></defs><rect x="105.5" y="7.5" width="15" height="14" fill="url(#gci)" stroke="url(#gc)"/><rect x="105" y="19.8" width="16" height="1.9" fill="#3f66ba"/><path d="M108.5 12.6v5.9h10.5" stroke="#7a7a7a" fill="none"/><rect x="109.6" y="12.6" width="2" height="5.6" fill="#2f6ad8"/><rect x="112.8" y="13.4" width="2" height="4.8" fill="#d4a018"/><rect x="116" y="10" width="2" height="8.2" fill="#f04a4a"/><path d="M106.52 7.32L110.68 11.48M110.68 7.32L106.52 11.48" stroke="#f0a818" stroke-width="0.95" stroke-dasharray="1.5 0.5" fill="none"/><path d="M105.40 9.40L111.80 9.40M108.60 6.20L108.60 12.60" stroke="#f08a20" stroke-width="1" fill="none"/><circle cx="108.6" cy="9.4" r="0.9" fill="#ffe4b8"/><path d="M17.5 74V61.5H25.6" fill="none" stroke="#9db4e0"/><rect x="18" y="62" width="7.6" height="12" fill="#fff"/><path d="M25.6 61.6V64.3H28.2" fill="#fff" stroke="#5a74b0" stroke-width="0.8"/><path d="M25.8 61.8L29.2 64.6" stroke="#41588e" stroke-width="0.9" stroke-dasharray="1.1 0.7"/><path d="M25.6 64.5L28.4 68.4V73.6H25.6Z" fill="#eef2fa"/><path d="M17 74.4H24.2" stroke="#3c5a9c" stroke-width="1"/><path d="M24.2 74.5L27 75" stroke="#9db4e0" stroke-width="0.8"/><path d="M19 63.3h2" stroke="#1c3a90" stroke-width="0.9"/><path d="M19 65.4h4M19 67.4h3" stroke="#5a78c0" stroke-width="0.8"/><rect x="19" y="69.2" width="6" height="3.8" fill="#7d98cd"/><rect x="20" y="70.2" width="2" height="1.9" fill="#ffd85a"/><path d="M23 72.1V70.2L25.6 72.1Z" fill="#4aa83a"/><path d="M23.6 70.2H25L26.4 72.1H25.4Z" fill="#bfe3b4"/><path d="M24 68.6L27.5 65.2L30 68.9L27.5 72.1Z" fill="#00309c"/><path d="M30.5 69.8V73.4L29.4 74.6M28.9 75.5H25" stroke="#00309c" stroke-width="1" fill="none"/><rect x="27.9" y="73" width="0.9" height="0.9" fill="#3a56a6"/><rect x="52.8" y="61.8" width="12.6" height="13.6" fill="#e9e9e9"/><rect x="53" y="64.4" width="3.4" height="11" fill="#d6d6d6"/><rect x="56.4" y="64.6" width="8.6" height="10.6" fill="#fdfcf8"/><path d="M52.5 75.5V61.5H65.5V67.8" fill="none" stroke="#484848" stroke-width="0.9"/><path d="M52.5 75.5H58.8" stroke="#484848" stroke-width="0.9"/><path d="M53.1 62.1h3.1v1.9h-3.1zM57 62.1h3.7v1.9H57zM62 62.1h3v1.9h-3z" fill="#a31e1e"/><path d="M54 62.4h1.4M58 62.4h1.8M63 62.4h1.4" stroke="#f6eaea" stroke-width="0.8"/><path d="M53.2 66.3h2.1M53.2 70.3h2.1M53.2 74.2h2.1" stroke="#fff" stroke-width="1.3"/><path d="M55.8 65.4v1.9h-2.6M55.8 69.4v1.9h-2.6M55.8 73.2v1" stroke="#7c7c7c" stroke-width="0.9" fill="none"/><path d="M61.4 64.6v3" stroke="#c4c4c4" stroke-width="0.6"/><path d="M58 66.4h2.2M63 66.4h2.2" stroke="#0a50ff" stroke-width="1.1"/><rect x="58" y="69.9" width="1.2" height="1.1" fill="#1a5cff"/><rect x="58" y="73.8" width="1.2" height="1.1" fill="#3a74ff"/><defs><linearGradient id="gm" x1="0" y1="0" x2="1" y2="1"><stop offset="0" stop-color="#6fcdf6"/><stop offset="0.75" stop-color="#f4fcff"/></linearGradient><linearGradient id="gr" x1="0" y1="0" x2="1" y2="1"><stop offset="0" stop-color="#d6a408"/><stop offset="0.6" stop-color="#c89600"/><stop offset="1" stop-color="#6a5004"/></linearGradient></defs><circle cx="63.6" cy="72.4" r="3.05" fill="url(#gm)" stroke="url(#gr)" stroke-width="1"/><path d="M80.5 61.5h5l3 3v10h-11v-7" fill="url(#gf)" stroke="url(#gb)" stroke-width="1.1"/><path d="M85.5 61.5v3h3" fill="#fff" stroke="#1446b4" stroke-width="0.9"/><path d="M77 74.7h12" stroke="#0c38a8" stroke-width="1.3"/><rect x="79.4" y="69" width="7.4" height="4" fill="#7c9ee6" stroke="#3f6ed2" stroke-width="0.8"/><rect x="80.2" y="70" width="1.9" height="2" fill="#ffc90a"/><rect x="83.1" y="70" width="2.8" height="2" fill="#10b31a"/><path d="M80.6 63.6h1.9M77.6 67.8h3.8" stroke="#8a98b4" stroke-width="0.9" fill="none"/><rect x="81.9" y="65" width="1" height="1" fill="#2a5cd0"/><rect x="77.2" y="67.4" width="0.9" height="1.2" fill="#2a5cd0"/><rect x="75.1" y="61" width="6" height="6" fill="#f00404"/><rect x="76.1" y="62" width="4" height="4" fill="#c23636"/><rect x="75.1" y="66.2" width="6" height="0.8" fill="#9a0808"/><path d="M104.5 61.5h5l3 3v10h-11v-7" fill="url(#gf)" stroke="url(#gb)" stroke-width="1.1"/><path d="M109.5 61.5v3h3" fill="#fff" stroke="#1446b4" stroke-width="0.9"/><path d="M101 74.7h12" stroke="#0c38a8" stroke-width="1.3"/><circle cx="107.3" cy="69.2" r="3.9" fill="url(#gg)"/><path d="M107.6 65.6q2.2-0.2 3.2 1.6q0.6 2.2-0.6 3.6q-1.2 0.6-1.8-0.6q0.4-1.6-0.6-2.2q-1.2-0.6-0.2-2.4z" fill="#1f8a5c"/><path d="M104 67.6q1.2-0.4 1.6 0.8l1 1.4l-0.4 1.8q-1.8-0.8-2.4-2.6z" fill="#1f8a5c"/><path d="M100.32 62.12L104.88 66.68M104.88 62.12L100.32 66.68" stroke="#f0a818" stroke-width="0.95" stroke-dasharray="1.5 0.5" fill="none"/><path d="M99.10 64.40L106.10 64.40M102.60 60.90L102.60 67.90" stroke="#f0700c" stroke-width="1" fill="none"/><circle cx="102.6" cy="64.4" r="0.9" fill="#ffe4b8"/><path d="M138 61.5H145.6Q148.6 61.5 148.6 64.4V67Q148.6 70.2 145 70.4H143.6L140.4 74.6V70.4H138.6Q135.6 70.4 135.6 67.4V64.5Q135.6 61.5 138 61.5Z" fill="url(#gf)" stroke="url(#gb)" stroke-width="1.15"/><path d="M141 65h5.2M138.2 67.5h8" stroke="#6f9ae0" stroke-width="1"/><path d="M135.12 61.32L139.68 65.88M139.68 61.32L135.12 65.88" stroke="#f0a818" stroke-width="0.95" stroke-dasharray="1.5 0.5" fill="none"/><path d="M133.90 63.60L140.90 63.60M137.40 60.10L137.40 67.10" stroke="#f0700c" stroke-width="1" fill="none"/><circle cx="137.4" cy="63.6" r="0.9" fill="#ffe4b8"/><path d="M162 61.5H169.6Q172.6 61.5 172.6 64.4V67Q172.6 70.2 169 70.4H167.6L164.4 74.6V70.4H162.6Q159.6 70.4 159.6 67.4V64.5Q159.6 61.5 162 61.5Z" fill="url(#gf)" stroke="url(#gb)" stroke-width="1.15"/><path d="M165 65h5.2M162.2 67.5h8" stroke="#6f9ae0" stroke-width="1"/><path d="M158.6 61.4h3.8l2.2 2.2v5h-6z" fill="url(#gy)" stroke="#5a3c10" stroke-width="1.1"/><path d="M162.2 61.6v2.2h2.2" fill="none" stroke="#5a3c10" stroke-width="0.9"/><circle cx="200.4" cy="67.3" r="6.9" fill="#c0e6f6"/><circle cx="198.5" cy="65" r="3" fill="#e4f5fb"/><path d="M196 62.5q2-2 4.5-1.6l-1 2.2l-2.4 1zM204 61.9q3 1.6 3.4 4.6h-5.2q-0.6-2.6 1.8-4.6zM195.6 66.4l2.4 1.2l0.6 2.6l-1.6 2.4q-1.6-2.6-1.4-6.2z" fill="#b4d8b0"/><path d="M201.1 68.1h7.8v1.2l-2.9 3.4v2.1h-1.9v-2.1l-3-3.4z" fill="#b4c5ec"/><path d="M201.1 68.6h7.8" stroke="#a3b6e6" stroke-width="0.9"/><rect x="218" y="61.5" width="13.6" height="13" fill="#ececec"/><path d="M219 63.5h12M219 65.5h12M219 67.5h12M219 69.5h12M219 71.5h12M219 73.5h12" stroke="#f8f8f8" stroke-width="0.8"/><rect x="221.2" y="61.2" width="7.6" height="12.2" fill="#f3f6fd" stroke="#c2d0f2" stroke-width="0.9"/><path d="M224 63.4h2M224 65.4h1.6M224 67.4h1.2" stroke="#9dbaf0" stroke-width="0.8"/><path d="M224.6 72l2.6-5.6q0.6-0.6 1.2 0l4.4 6.4z" fill="#b6c5ea"/><path d="M222.4 75.6l4.6-9.6" stroke="#b4b4b4" stroke-width="0.9" stroke-dasharray="1 0.8"/></svg>
<div class="t" style="left:19.60px;top:12.51px;font-size:7.2px;line-height:11px;font-weight:bold;color:#103cb0;">SV</div>
</body></html>
